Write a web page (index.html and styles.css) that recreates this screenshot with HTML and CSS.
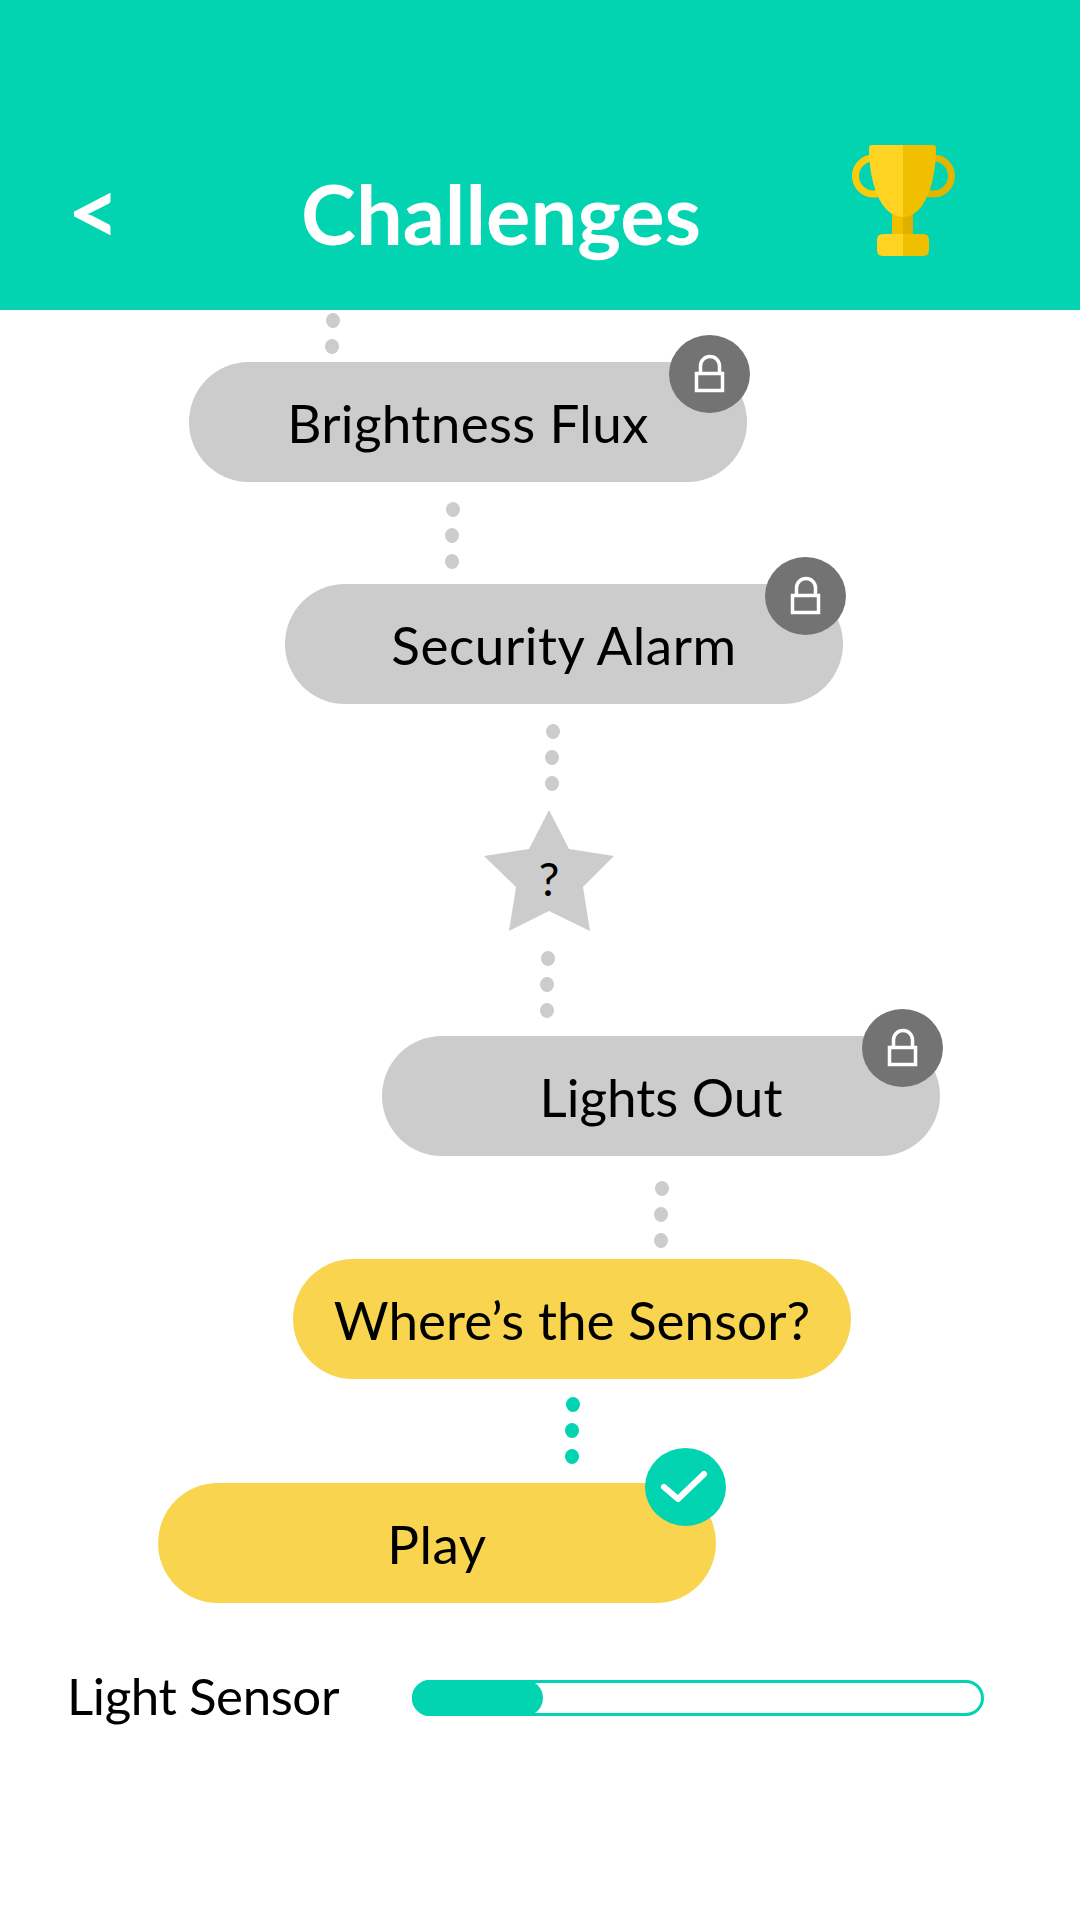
FILE: index.html
```html
<!DOCTYPE html>
<html>
<head>
    <link rel="stylesheet" href="styles.css">
</head>
<body>
    <header class="header">
        <span class="back">&lt;</span>
        <h1 class="title">Challenges</h1>
        <svg class="trophy" viewBox="0 0 104 111" width="104" height="111">
            <circle cx="21.500" cy="31" r="18" fill="none" stroke="#fdcb0a" stroke-width="7"/>
            <circle cx="81.500" cy="31" r="18" fill="none" stroke="#e0b600" stroke-width="7"/>
            <rect x="40" y="68" width="11" height="24" fill="#f0c000"/>
            <rect x="51" y="68" width="10" height="24" fill="#e0b000"/>
            <path d="M51 0H20q-3 0-3 3c0 36 12 69 34 69z" fill="#ffd322"/>
            <path d="M51 0h30q3 0 3 3c0 36-12 69-33 69z" fill="#f0c000"/>
            <path d="M51 89H31q-6 0-6 6v10q0 6 6 6h20z" fill="#ffd322"/>
            <path d="M51 89h20q6 0 6 6v10q0 6-6 6H51z" fill="#f0c000"/>
        </svg>
    </header>

    <main class="path">
        <div class="dots dots-top">
            <span class="dot"></span>
            <span class="dot"></span>
        </div>
        <div class="pill pill-brightness">
            Brightness Flux
            <span class="badge">
                <svg viewBox="0 0 80 78" width="80" height="78"><path d="M31.500 37v-6a9.500 9.500 0 0 1 19 0v6M27.500 38.500h26v17h-26z" fill="none" stroke="#fff" stroke-width="3.500"/></svg>
            </span>
        </div>

        <div class="dots dots-security">
            <span class="dot"></span>
            <span class="dot"></span>
            <span class="dot"></span>
        </div>
        <div class="pill pill-security">
            Security Alarm
            <span class="badge">
                <svg viewBox="0 0 80 78" width="80" height="78"><path d="M31.500 37v-6a9.500 9.500 0 0 1 19 0v6M27.500 38.500h26v17h-26z" fill="none" stroke="#fff" stroke-width="3.500"/></svg>
            </span>
        </div>

        <div class="dots dots-star">
            <span class="dot"></span>
            <span class="dot"></span>
            <span class="dot"></span>
        </div>
        <div class="star">?</div>

        <div class="dots dots-lights">
            <span class="dot"></span>
            <span class="dot"></span>
            <span class="dot"></span>
        </div>
        <div class="pill pill-lights">
            Lights Out
            <span class="badge">
                <svg viewBox="0 0 80 78" width="80" height="78"><path d="M31.500 37v-6a9.500 9.500 0 0 1 19 0v6M27.500 38.500h26v17h-26z" fill="none" stroke="#fff" stroke-width="3.500"/></svg>
            </span>
        </div>

        <div class="dots dots-sensor">
            <span class="dot"></span>
            <span class="dot"></span>
            <span class="dot"></span>
        </div>
        <div class="pill pill-done pill-sensor">Where’s the Sensor?</div>

        <div class="dots dots-done dots-play">
            <span class="dot"></span>
            <span class="dot"></span>
            <span class="dot"></span>
        </div>
        <div class="pill pill-done pill-play">
            Play
            <span class="badge badge-done">
                <svg viewBox="0 0 80 78" width="80" height="78"><path d="M19 39l14 12 26-25" fill="none" stroke="#fff" stroke-width="6" stroke-linecap="round" stroke-linejoin="round"/></svg>
            </span>
        </div>
    </main>

    <div class="sensor">
        <span class="sensor-label">Light Sensor</span>
        <div class="bar">
            <div class="bar-fill"></div>
        </div>
    </div>
</body>
</html>
```

FILE: styles.css
```css
body {
    font-family: Lato, sans-serif;
    margin: 0;
    background-color: #fff;
    color: #000;
}
.header {
    display: flex;
    align-items: flex-start;
    height: 310px;
    padding-left: 67px;
    background-color: #02d3b1;
    color: #fff;
    box-sizing: border-box;
}
.back {
    width: 234px;
    margin-top: 160px;
    font-size: 92px;
    font-weight: 700;
    line-height: 100px;
}
.title {
    width: 551px;
    margin: 163px 0 0;
    font-size: 83px;
    font-weight: 700;
    line-height: 100px;
}
.trophy {
    margin-top: 145px;
}
.path {
    display: flex;
    flex-direction: column;
    align-items: flex-start;
}
.dots {
    display: flex;
    flex-direction: column;
    gap: 11px;
}
.dot {
    width: 14px;
    height: 15px;
    border-radius: 50%;
    background-color: #ccc;
}
.dot:first-child {
    margin-left: 1px;
}
.dots-done .dot {
    background-color: #02d3b1;
}
.dots-top {
    margin: 3px 0 8px 325px;
}
.dots-security {
    margin: 20px 0 15px 445px;
}
.dots-star {
    margin: 20px 0 19px 545px;
}
.dots-lights {
    margin: 20px 0 18px 540px;
}
.dots-sensor {
    margin: 25px 0 11px 654px;
}
.dots-play {
    margin: 18px 0 19px 565px;
}
.pill {
    position: relative;
    display: flex;
    align-items: center;
    justify-content: center;
    width: 558px;
    height: 120px;
    border-radius: 60px;
    background-color: #ccc;
    font-size: 53px;
}
.pill-done {
    background-color: #f8d44f;
}
.pill-brightness {
    margin-left: 189px;
    letter-spacing: 0.35px;
}
.pill-security {
    margin-left: 285px;
    letter-spacing: 0.55px;
}
.pill-lights {
    margin-left: 382px;
}
.pill-sensor {
    margin-left: 293px;
}
.pill-play {
    margin-left: 158px;
    letter-spacing: 0.6px;
}
.badge {
    position: absolute;
    top: -27px;
    right: -3px;
    width: 81px;
    height: 78px;
    border-radius: 50%;
    background-color: #737373;
}
.badge svg {
    display: block;
}
.badge-done {
    top: -35px;
    right: -10px;
    background-color: #02d3b1;
}
.star {
    display: flex;
    align-items: center;
    justify-content: center;
    width: 130px;
    height: 121px;
    padding-top: 15px;
    margin-left: 484px;
    box-sizing: border-box;
    background-color: #ccc;
    clip-path: polygon(65px 0, 85px 39px, 130px 46px, 99px 77px, 106px 121px, 65px 101px, 25px 121px, 32px 77px, 0 46px, 45px 39px);
    font-size: 46px;
}
.sensor {
    display: flex;
    align-items: center;
    margin-top: 63px;
    padding-left: 67px;
}
.sensor-label {
    width: 345px;
    margin-bottom: 4px;
    font-size: 51px;
    letter-spacing: -0.4px;
    line-height: 60px;
}
.bar {
    width: 572px;
    height: 36px;
    border: 3px solid #02d3b1;
    border-radius: 18px;
    box-sizing: border-box;
}
.bar-fill {
    width: 131px;
    height: 36px;
    margin: -3px 0 0 -3px;
    border-radius: 18px;
    background-color: #02d3b1;
}
```
